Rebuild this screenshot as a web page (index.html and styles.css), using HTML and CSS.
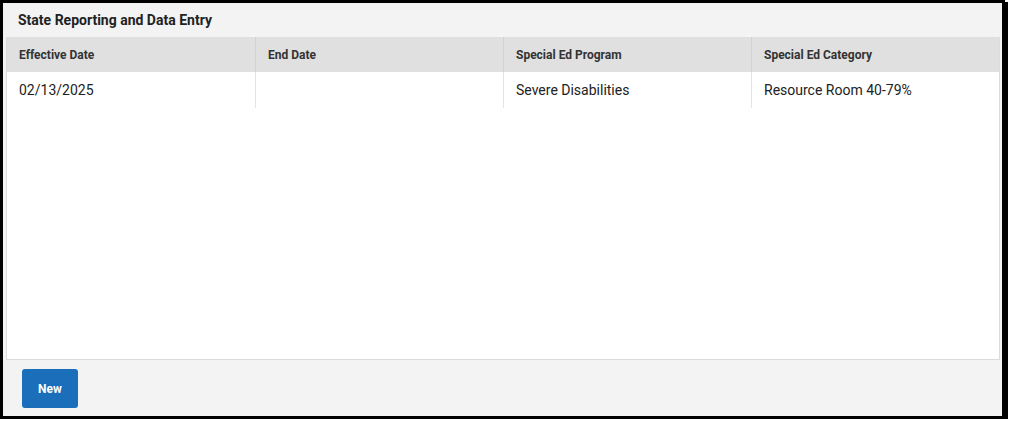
FILE: index.html
```html
<!DOCTYPE html>
<html>
<head>
<meta charset="utf-8">
<link rel="stylesheet" href="styles.css">
</head>
<body>
<div class="frame">
  <div class="title">State Reporting and Data Entry</div>
  <div class="panel">
    <div class="row head">
      <div class="cell">Effective Date</div>
      <div class="cell">End Date</div>
      <div class="cell">Special Ed Program</div>
      <div class="cell">Special Ed Category</div>
    </div>
    <div class="row data">
      <div class="cell">02/13/2025</div>
      <div class="cell"></div>
      <div class="cell">Severe Disabilities</div>
      <div class="cell">Resource Room 40-79%</div>
    </div>
  </div>
  <div class="footer">
    <button class="btn">New</button>
  </div>
</div>
</body>
</html>
```

FILE: styles.css
```css
html, body {
  margin: 0;
  padding: 0;
  background: #fff;
}
.frame {
  box-sizing: border-box;
  width: 1005px;
  height: 419px;
  border: 3px solid #000;
  box-shadow: 3px 2px 0 #000;
  background: #f3f3f3;
  display: flex;
  flex-direction: column;
  font-family: Roboto, "Liberation Sans", sans-serif;
}
.title {
  height: 34px;
  line-height: 34px;
  padding-left: 15px;
  font-size: 14px;
  font-weight: bold;
  color: #222;
}
.panel {
  flex: 1;
  margin: 0 2px 0 3px;
  background: #fff;
  border: 1px solid #dcdcdc;
  border-top: none;
}
.row {
  display: grid;
  grid-template-columns: repeat(4, 1fr);
}
.cell {
  padding-left: 12px;
  border-left: 1px solid #e4e4e4;
}
.cell:first-child {
  border-left: none;
}
.head {
  height: 35px;
  background: #e0e0e0;
}
.head .cell {
  line-height: 37px;
  font-size: 12px;
  font-weight: bold;
  color: #333;
  border-left-color: #d2d2d2;
}
.data {
  height: 36px;
}
.data .cell {
  line-height: 36px;
  font-size: 14px;
  color: #222;
}
.footer {
  height: 56px;
  padding: 9px 0 0 19px;
  box-sizing: border-box;
}
.btn {
  width: 56px;
  height: 39px;
  border: none;
  border-radius: 3px;
  background: #1b6eb9;
  color: #fff;
  font-family: Roboto, "Liberation Sans", sans-serif;
  font-size: 12px;
  font-weight: bold;
  padding: 0;
}
```
